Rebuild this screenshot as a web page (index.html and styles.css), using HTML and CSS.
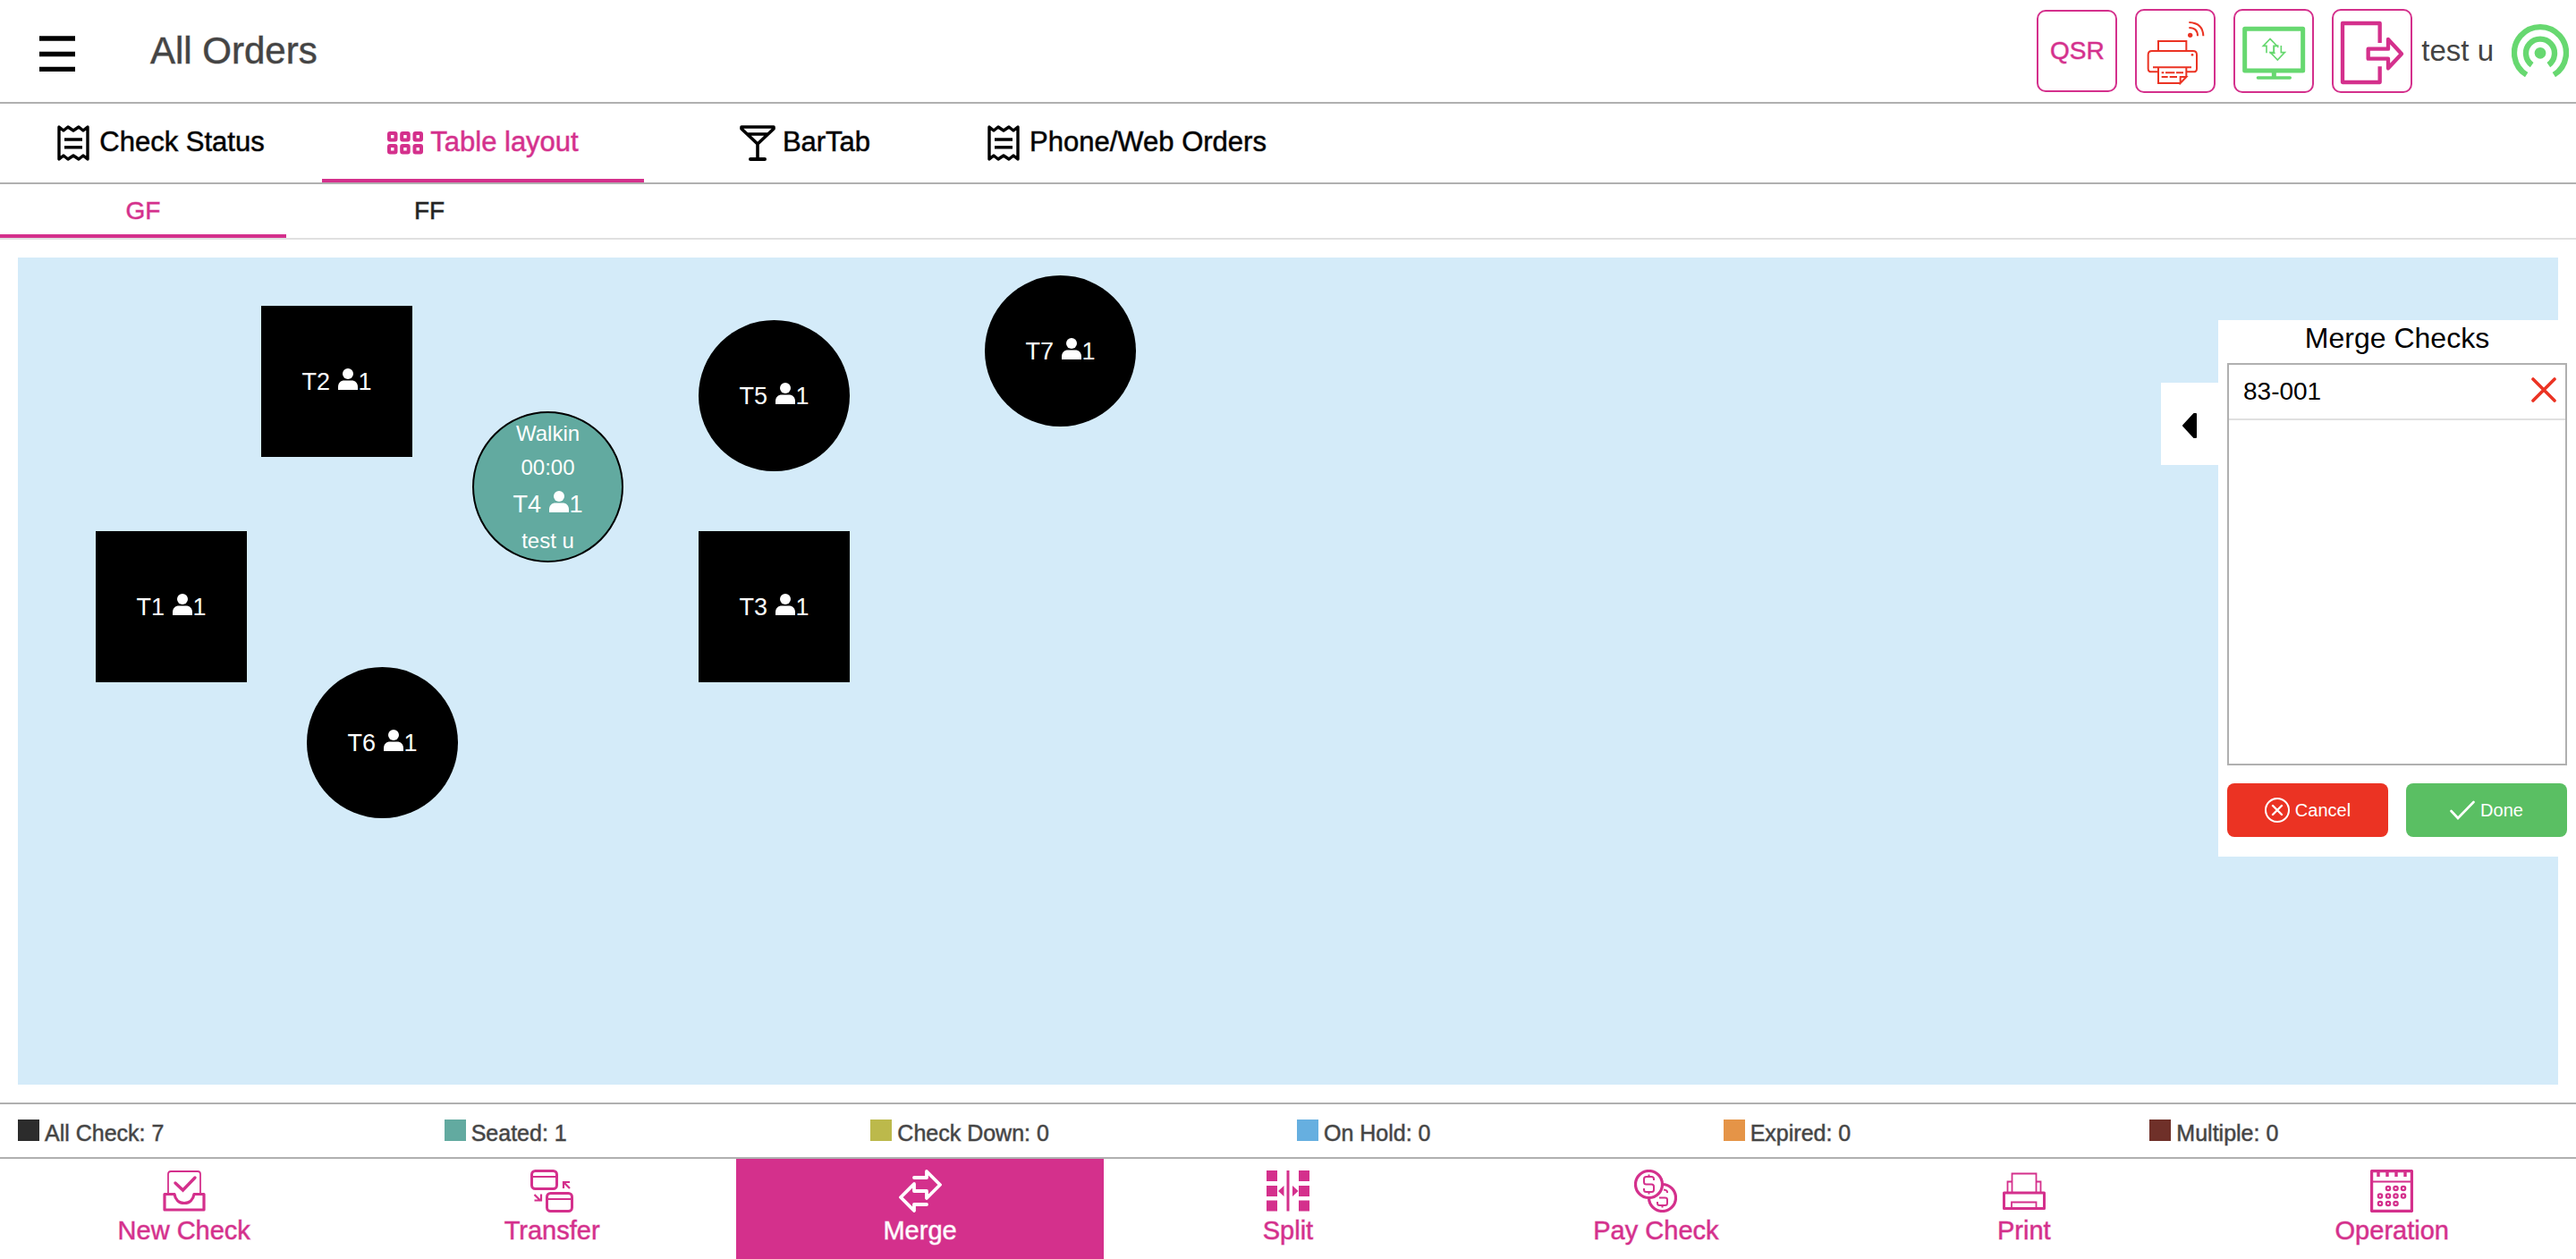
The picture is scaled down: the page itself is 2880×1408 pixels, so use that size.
FILE: index.html
```html
<!DOCTYPE html>
<html lang="en">
<head>
<meta charset="utf-8">
<meta name="viewport" content="width=device-width, initial-scale=1">
<title>All Orders</title>
<link rel="stylesheet" href="styles.css">
</head>
<body>
<svg class="sprite" aria-hidden="true">
  <symbol id="receipt" viewBox="0 0 36 40">
    <path d="M2 2l5 4 5-4 6 4 6-4 5 4 5-4v36l-5-4-5 4-6-4-6 4-5-4-5 4z" fill="none" stroke="currentColor" stroke-width="3.4" stroke-linejoin="round"/>
    <path d="M8 16h20M8 24.700h20" stroke="currentColor" stroke-width="3.4"/>
  </symbol>
  <symbol id="person" viewBox="0 0 22 24">
    <circle cx="11" cy="6" r="6" fill="currentColor"/>
    <path d="M0 24v-3c0-5 3-7.500 7-7.500h8c4 0 7 2.500 7 7.500v3z" fill="currentColor"/>
  </symbol>
</svg>

<header class="header">
  <button class="menu" type="button" aria-label="Menu">
    <svg width="40" height="46" viewBox="0 0 40 46"><path d="M0 9h40M0 26.500h40M0 43.500h40" stroke="currentColor" stroke-width="5.400"/></svg>
  </button>
  <h1 class="title">All Orders</h1>
  <div class="tools">
    <button class="tool tool-text" type="button">QSR</button>
    <button class="tool tool-red" type="button" aria-label="Printer">
      <svg width="66" height="76" viewBox="69 57 198 228" fill="none" stroke="currentColor" stroke-width="6">
        <path d="M111 168v-30h94v30M111 241H88q-11 0-11-11v-46q0-13 13-13h137q13 0 13 13v46q0 11-11 11h-22M93 226h129M111 226v53h74l20-21v-32M185 279v-21h20z"/>
        <path d="M122 244h8M135 244h31M171 244h24M122 258h21M149 258h25"/>
        <circle cx="225" cy="184" r="4" fill="currentColor" stroke="none"/>
        <circle cx="218" cy="118" r="8" fill="currentColor" stroke="none"/>
        <path d="M214 93q29 0 29 28M214 75q47 2 48 46"/>
      </svg>
    </button>
    <button class="tool tool-green" type="button" aria-label="Display sync">
      <svg width="73" height="68" viewBox="390 69 219 204" fill="none" stroke="currentColor">
        <path d="M401 97h195v140H401z" stroke-width="15" stroke-linejoin="round"/>
        <path d="M499 240v20" stroke-width="15"/>
        <path d="M445 261h108" stroke-width="10" stroke-linecap="round"/>
        <path d="M474 178v-24h-11l23-24 23 24h-11v19q0 5 5 5h-16v-5M523 153v23h12l-24 25-24-25h12v-17q0-6 13-6v7" stroke-width="5"/>
      </svg>
    </button>
    <button class="tool" type="button" aria-label="Log out">
      <svg width="74" height="76" viewBox="720 57 222 228" fill="none" stroke="currentColor" stroke-width="13" stroke-linejoin="round">
        <path d="M857 144V78H732v198h125v-53"/>
        <path d="M818 164h67v-32l45 49-45 48v-32h-67z"/>
      </svg>
    </button>
    <span class="user">test u</span>
    <svg class="signal" width="64" height="62" viewBox="1296 78 192 186" fill="none" stroke="currentColor" stroke-width="19">
      <circle cx="1392" cy="178" r="19" fill="currentColor" stroke="none"/>
      <path d="M1364 218A48 48 0 1 1 1420 218M1346 251A87 87 0 1 1 1438 251"/>
    </svg>
  </div>
</header>

<nav class="tabs" aria-label="Orders">
  <button class="tab wide-gap" type="button"><svg width="36" height="40"><use href="#receipt"/></svg>Check Status</button>
  <button class="tab active" type="button">
    <svg width="40" height="26" viewBox="0 0 40 26" fill="none" stroke="currentColor" stroke-width="4"><rect x="2" y="2" width="7.500" height="7.500" rx="1"/><rect x="16.200" y="2" width="7.500" height="7.500" rx="1"/><rect x="30.500" y="2" width="7.500" height="7.500" rx="1"/><rect x="2" y="16" width="7.500" height="7.500" rx="1"/><rect x="16.200" y="16" width="7.500" height="7.500" rx="1"/><rect x="30.500" y="16" width="7.500" height="7.500" rx="1"/></svg>Table layout</button>
  <button class="tab" type="button">
    <svg width="40" height="40" viewBox="0 0 40 40" fill="none" stroke="currentColor" stroke-width="3.600" stroke-linejoin="round"><path d="M2 2h36v2L20 21 2 4zM8 10h24M20 20v18"/><path d="M12 38h16" stroke-width="4" stroke-linecap="round"/></svg>BarTab</button>
  <button class="tab wide-gap" type="button"><svg width="36" height="40"><use href="#receipt"/></svg>Phone/Web Orders</button>
</nav>

<nav class="floors" aria-label="Floors">
  <button class="floor active" type="button">GF</button>
  <button class="floor" type="button">FF</button>
</nav>

<main class="stage">
  <div class="plan">
    <button class="table t1" type="button"><span class="seat">T1 <svg width="22" height="24"><use href="#person"/></svg>1</span></button>
    <button class="table t2" type="button"><span class="seat">T2 <svg width="22" height="24"><use href="#person"/></svg>1</span></button>
    <button class="table t3" type="button"><span class="seat">T3 <svg width="22" height="24"><use href="#person"/></svg>1</span></button>
    <button class="table round seated t4" type="button">
      <span class="info">Walkin</span>
      <span class="info">00:00</span>
      <span class="seat">T4 <svg width="22" height="24"><use href="#person"/></svg>1</span>
      <span class="info">test u</span>
    </button>
    <button class="table round t5" type="button"><span class="seat">T5 <svg width="22" height="24"><use href="#person"/></svg>1</span></button>
    <button class="table round t6" type="button"><span class="seat">T6 <svg width="22" height="24"><use href="#person"/></svg>1</span></button>
    <button class="table round t7" type="button"><span class="seat">T7 <svg width="22" height="24"><use href="#person"/></svg>1</span></button>
  </div>

  <section class="merge" aria-labelledby="merge-title">
    <button class="drawer" type="button" aria-label="Collapse panel">
      <svg width="16" height="28" viewBox="0 0 16 28"><path d="M15 1v26h-2L1 14 13 1z" fill="currentColor" stroke="currentColor" stroke-width="2" stroke-linejoin="round"/></svg>
    </button>
    <h2 class="merge-title" id="merge-title">Merge Checks</h2>
    <ul class="checks">
      <li class="check">83-001
        <button class="remove" type="button" aria-label="Remove 83-001"><svg width="28" height="28" viewBox="0 0 28 28"><path d="M2 2l24 24M26 2L2 26" stroke="currentColor" stroke-width="3.600" stroke-linecap="round"/></svg></button>
      </li>
    </ul>
    <div class="actions">
      <button class="action cancel" type="button"><svg width="28" height="28" viewBox="0 0 28 28" fill="none" stroke="currentColor" stroke-width="2"><circle cx="14" cy="14" r="13"/><path d="M9 9l10 10M19 9L9 19" stroke-width="2.400" stroke-linecap="round"/></svg>Cancel</button>
      <button class="action done" type="button"><svg width="28" height="28" viewBox="0 0 28 28" fill="none" stroke="currentColor" stroke-width="2.600" stroke-linecap="round"><path d="M1.500 15l7.500 8L26.500 5"/></svg>Done</button>
    </div>
  </section>
</main>

<ul class="legend">
  <li class="key"><span class="swatch all"></span>All Check: 7</li>
  <li class="key"><span class="swatch teal"></span>Seated: 1</li>
  <li class="key"><span class="swatch olive"></span>Check Down: 0</li>
  <li class="key"><span class="swatch blue"></span>On Hold: 0</li>
  <li class="key"><span class="swatch orange"></span>Expired: 0</li>
  <li class="key"><span class="swatch brown"></span>Multiple: 0</li>
</ul>

<nav class="toolbar" aria-label="Check actions">
  <button class="command" type="button">
    <svg width="48" height="48" viewBox="0 0 48 48" fill="none" stroke="currentColor"><path d="M6 27V5q0-3 3-3h30q3 0 3 3v22" stroke-width="1.800"/><path d="M14 15l8.500 8L36 9" stroke-width="3.400" stroke-linecap="round"/><path d="M2 27.500h11c1 6 5 10 11 10s10-4 11-10h11V45H2z" stroke-width="3.200" stroke-linejoin="round"/></svg>
    New Check</button>
  <button class="command" type="button">
    <svg width="48" height="48" viewBox="0 0 48 48" fill="none" stroke="currentColor" stroke-width="3"><rect x="1.500" y="1.500" width="28" height="20" rx="4"/><rect x="18.500" y="26.500" width="28" height="20" rx="4"/><path d="M2 8h28M19 33h28M37 21v-7h7M37 14l7 7M4.500 28l7 7M12 27.500v7H4.500" stroke-width="2.200"/></svg>
    Transfer</button>
  <button class="command current" type="button">
    <svg width="48" height="48" viewBox="0 0 48 48" fill="none" stroke="currentColor" stroke-width="3.800" stroke-linejoin="round" stroke-linecap="round"><path d="M17 9h14V2l15 15-15 15v-8H17v-8L2 31l15 15v-7h14"/></svg>
    Merge</button>
  <button class="command" type="button">
    <svg width="48" height="48" viewBox="0 0 48 48" fill="currentColor"><path d="M0 1h12v12H0zM0 18h12v12H0zM0 34.500h12v12H0zM36 1h12v12H36zM36 18h12v12H36zM36 34.500h12v12H36zM22.500 1h3v45.500h-3zM19.500 18v12L13 24zM29 18v12l6.500-6z"/></svg>
    Split</button>
  <button class="command" type="button">
    <svg width="48" height="48" viewBox="0 0 48 48" fill="none" stroke="currentColor" stroke-width="3.200"><circle cx="16.500" cy="16.500" r="15"/><path d="M31.500 16.500a15 15 0 1 1-15 15"/><path d="M22 12v-1.500q0-2.500-2.500-2.500h-6q-2.500 0-2.500 2.500V14q0 2.500 2.500 2.500h6Q22 16.500 22 19v3.500q0 2.500-2.500 2.500h-6q-2.500 0-2.500-2.500V21M16.500 5.500V8M16.500 25v2.500" stroke-width="2"/><path d="M37 26v-1q0-2-4-2.500M28 31.500h6.500q2.500 0 2.500 2v4q0 2.500-2.500 2.500h-6q-2.500 0-2.500-2.500V36M31.500 40v2.500" stroke-width="2"/></svg>
    Pay Check</button>
  <button class="command" type="button">
    <svg width="48" height="48" viewBox="0 0 48 48" fill="none" stroke="currentColor" stroke-width="1.800"><path d="M10.500 25V4.500h27V25M5.500 25V13.500h5V25M37.500 25V13.500h5V25M10 42v-5.500h27.500V42"/><path d="M1.500 26h45v17.500h-45z" stroke-width="3" stroke-linejoin="round"/></svg>
    Print</button>
  <button class="command" type="button">
    <svg width="48" height="48" viewBox="0 0 48 48" fill="none" stroke="currentColor" stroke-width="2.200"><rect x="1.500" y="1.500" width="45" height="45" rx="1" stroke-width="3.400"/><path d="M2 13.500h44" /><path d="M9 2v6M19 2v6M29 2v6M39 2v6" stroke-width="3.400"/><circle cx="20" cy="21" r="2.200"/><circle cx="28.500" cy="21" r="2.200"/><circle cx="37" cy="21" r="2.200"/><circle cx="11" cy="29.500" r="2.200"/><circle cx="20" cy="29.500" r="2.200"/><circle cx="28.500" cy="29.500" r="2.200"/><circle cx="37" cy="29.500" r="2.200"/><circle cx="11" cy="38" r="2.200"/><circle cx="20" cy="38" r="2.200"/><circle cx="28.500" cy="38" r="2.200"/></svg>
    Operation</button>
</nav>
</body>
</html>
```
FILE: styles.css
```css
:root {
  --pink: #d4308c;
  --line: #b0b0b0;
  --ink: #444;
}

* { box-sizing: border-box; }

body {
  margin: 0;
  min-height: 100vh;
  display: flex;
  flex-direction: column;
  background: #fff;
  color: #000;
  font-family: "Liberation Sans", Arial, sans-serif;
}

button {
  margin: 0;
  padding: 0;
  border: 0;
  background: none;
  color: inherit;
  font: inherit;
  cursor: pointer;
}

h1, h2, ul { margin: 0; padding: 0; font-weight: 400; list-style: none; }

svg { display: block; flex: none; }

.sprite { position: absolute; width: 0; height: 0; }

/* Medium weight: a half-transparent outline thickens the regular face */
.title, .tool-text, .tab, .floor, .key, .command {
  -webkit-text-stroke: 1px color-mix(in srgb, currentColor 50%, transparent);
}

/* Header */
.header {
  display: flex;
  align-items: center;
  height: 116px;
  padding: 0 8px 0 44px;
  border-bottom: 2px solid var(--line);
}

.title {
  margin-left: 84px;
  font-size: 42px;
  line-height: 48px;
  color: var(--ink);
}

.tools {
  display: flex;
  align-items: center;
  gap: 20px;
  margin-left: auto;
}

.tool {
  display: flex;
  align-items: center;
  justify-content: center;
  width: 90px;
  height: 94px;
  border: 2px solid var(--pink);
  border-radius: 10px;
  color: var(--pink);
}

.tool-text { height: 92px; font-size: 28px; }
.tool-red { color: #eb3323; }
.tool-green { color: #67d870; }

.user { margin-left: -10px; font-size: 33px; color: var(--ink); }
.signal { color: #67d870; }

/* Order views */
.tabs {
  display: flex;
  height: 90px;
  border-bottom: 2px solid var(--line);
}

.tab {
  display: flex;
  align-items: center;
  justify-content: center;
  gap: 8px;
  width: 12.5%;
  padding-top: 2px;
  border-bottom: 4px solid transparent;
  font-size: 31px;
}

.wide-gap { gap: 11px; }

.tab svg { margin-top: 2px; }

.active { border-bottom-color: var(--pink); color: var(--pink); }

.floors {
  display: flex;
  height: 62px;
  border-bottom: 2px solid #e0e0e0;
}

.floor {
  width: 320px;
  padding-top: 4px;
  border-bottom: 4px solid transparent;
  font-size: 28px;
  color: #222;
}

.floor.active { border-bottom-color: var(--pink); color: var(--pink); }

/* Floor plan */
.stage {
  position: relative;
  display: flex;
  flex: 1;
  min-height: 740px;
  padding: 20px;
}

.plan { position: relative; flex: 1; background: #d4ebf9; }

.table {
  position: absolute;
  display: flex;
  flex-direction: column;
  align-items: center;
  justify-content: center;
  width: 169px;
  height: 169px;
  background: #000;
  color: #fff;
}

.round { border-radius: 50%; }
.seated { border: 2px solid #000; background: #62aaa0; }
.seat { font-size: 27px; line-height: 44px; }
.seat svg { display: inline; margin-left: 2px; }
.info { font-size: 24px; line-height: 38px; }

.t1 { left: 87px; top: 306px; }
.t2 { left: 272px; top: 54px; }
.t3 { left: 761px; top: 306px; }
.t4 { left: 508px; top: 172px; }
.t5 { left: 761px; top: 70px; }
.t6 { left: 323px; top: 458px; }
.t7 { left: 1081px; top: 20px; }

/* Merge panel */
.merge {
  position: absolute;
  top: 90px;
  right: 0;
  width: 400px;
  padding: 0 10px 22px;
  background: #fff;
}

.drawer {
  position: absolute;
  top: 70px;
  right: 100%;
  display: flex;
  align-items: center;
  justify-content: center;
  width: 64px;
  height: 92px;
  padding-top: 4px;
  background: #fff;
}

.merge-title {
  padding-bottom: 8px;
  font-size: 32px;
  line-height: 40px;
  text-align: center;
}

.checks { height: 450px; border: 2px solid var(--line); overflow: auto; }

.check {
  display: flex;
  align-items: center;
  justify-content: space-between;
  height: 62px;
  padding: 0 10px 0 16px;
  border-bottom: 2px solid #e0e0e0;
  font-size: 28px;
}

.remove { padding-bottom: 4px; color: #eb3323; }

.actions { display: flex; gap: 20px; padding-top: 20px; }

.action {
  display: flex;
  flex: 1;
  align-items: center;
  justify-content: center;
  gap: 6px;
  height: 60px;
  border-radius: 8px;
  font-size: 20px;
  color: #fff;
}

.cancel { background: #eb3323; }
.done { background: #5abf63; }

/* Status legend */
.legend {
  display: flex;
  height: 63px;
  padding: 17px 0 0 20px;
  border: solid var(--line);
  border-width: 2px 0;
}

.key {
  display: flex;
  flex: 1;
  align-items: baseline;
  gap: 6px;
  font-size: 25px;
  line-height: 30px;
  color: var(--ink);
}

.swatch { width: 24px; height: 24px; }
.all { background: #2c2c2c; }
.teal { background: #62aaa0; }
.olive { background: #bcb94b; }
.blue { background: #66afe0; }
.orange { background: #e59447; }
.brown { background: #6f3029; }

/* Bottom toolbar */
.toolbar { display: flex; height: 112px; }

.command {
  display: flex;
  flex: 1;
  flex-direction: column;
  align-items: center;
  gap: 4px;
  padding-top: 12px;
  font-size: 29px;
  line-height: 32px;
  color: var(--pink);
}

.current { background: var(--pink); color: #fff; }
```
